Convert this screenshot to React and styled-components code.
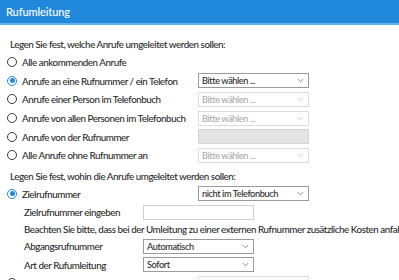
import React from "react";
import styled, { createGlobalStyle } from "styled-components";

const GlobalStyle = createGlobalStyle`
  html, body {
    margin: 0;
    padding: 0;
    background: #fff;
    overflow: hidden;
  }
  body {
    font-family: "Lato", "Liberation Sans", sans-serif;
    font-size: 9.8px;
    font-weight: 500;
    letter-spacing: -0.45px;
    color: #2a2a2a;
  }
`;

const Page = styled.div`
  width: 399px;
  height: 280px;
  overflow: hidden;
`;

const Header = styled.div`
  height: 23px;
  background: #2089dc;
  border-bottom: 2px solid #62b0ec;
  display: flex;
  align-items: center;
  padding-left: 6px;
  color: #fff;
  font-size: 11px;
  letter-spacing: -0.1px;
`;

const Content = styled.div`
  padding-left: 7px;
  white-space: nowrap;
`;

const Intro = styled.div`
  margin: ${p => p.$top}px 0 0 3px;
  height: 18px;
  line-height: 18px;
`;

const Row = styled.div`
  display: grid;
  grid-template-columns: 191px 111px;
  align-items: center;
  height: 18.6px;
`;

const RadioLabel = styled.label`
  display: flex;
  align-items: center;
  gap: 5px;
`;

const Radio = styled.span`
  box-sizing: border-box;
  width: 10px;
  height: 10px;
  border-radius: 50%;
  border: 1.2px solid ${p => (p.$checked ? "#2089dc" : "#3a3a3a")};
  display: flex;
  align-items: center;
  justify-content: center;
  &::after {
    content: "";
    width: 5px;
    height: 5px;
    border-radius: 50%;
    background: ${p => (p.$checked ? "#2089dc" : "transparent")};
  }
`;

const SelectBox = styled.div`
  box-sizing: border-box;
  height: 15px;
  border: 1px solid ${p => (p.$disabled ? "#dcdcdc" : "#9a9a9a")};
  color: ${p => (p.$disabled ? "#aaa" : "#2a2a2a")};
  background: #fff;
  display: flex;
  align-items: center;
  justify-content: space-between;
  padding: 0 4px 0 3px;
  font-size: 9.2px;
  letter-spacing: -0.4px;
`;

const GrayBox = styled.div`
  box-sizing: border-box;
  height: 15px;
  border: 1px solid #d4d4d4;
  background: #e4e4e4;
`;

const TextBox = styled.div`
  box-sizing: border-box;
  height: 15px;
  border: 1px solid #cfcfcf;
  background: #fff;
`;

const SubRow = styled.div`
  display: grid;
  grid-template-columns: 119px 111px;
  align-items: center;
  height: 18.6px;
  padding-left: 17px;
`;

const Note = styled.div`
  padding-left: 17px;
  height: 15px;
  line-height: 15px;
`;

const Chevron = ({ color }) => (
  <svg width="7" height="5" viewBox="0 0 7 5">
    <path d="M0.8 1 L3.5 3.8 L6.2 1" fill="none" stroke={color} strokeWidth="0.9" />
  </svg>
);

const Select = ({ value, disabled }) => (
  <SelectBox $disabled={disabled}>
    <span>{value}</span>
    <Chevron color={disabled ? "#c8c8c8" : "#888"} />
  </SelectBox>
);

const rows = [
  { label: "Alle ankommenden Anrufe" },
  { label: "Anrufe an eine Rufnummer / ein Telefon", checked: true, field: "select" },
  { label: "Anrufe einer Person im Telefonbuch", field: "disabled" },
  { label: "Anrufe von allen Personen im Telefonbuch", field: "disabled" },
  { label: "Anrufe von der Rufnummer", field: "gray" },
  { label: "Alle Anrufe ohne Rufnummer an", field: "disabled" },
];

const Field = ({ type }) => {
  if (type === "select") return <Select value="Bitte wählen ..." />;
  if (type === "disabled") return <Select value="Bitte wählen ..." disabled />;
  if (type === "gray") return <GrayBox />;
  return <span />;
};

export default function App() {
  return (
    <Page>
      <GlobalStyle />
      <Header>Rufumleitung</Header>
      <Content>
        <Intro $top={10}>Legen Sie fest, welche Anrufe umgeleitet werden sollen:</Intro>
        {rows.map(r => (
          <Row key={r.label}>
            <RadioLabel>
              <Radio $checked={r.checked} />
              {r.label}
            </RadioLabel>
            <Field type={r.field} />
          </Row>
        ))}
        <Intro $top={2}>Legen Sie fest, wohin die Anrufe umgeleitet werden sollen:</Intro>
        <Row>
          <RadioLabel>
            <Radio $checked />
            Zielrufnummer
          </RadioLabel>
          <Select value="nicht im Telefonbuch" />
        </Row>
        <SubRow>
          <span>Zielrufnummer eingeben</span>
          <TextBox />
        </SubRow>
        <Note>
          Beachten Sie bitte, dass bei der Umleitung zu einer externen Rufnummer zusätzliche Kosten anfallen können.
        </Note>
        <SubRow>
          <span>Abgangsrufnummer</span>
          <Select value="Automatisch" />
        </SubRow>
        <SubRow>
          <span>Art der Rufumleitung</span>
          <Select value="Sofort" />
        </SubRow>
        <Row>
          <RadioLabel>
            <Radio />
            Telefon
          </RadioLabel>
          <Select value="Bitte wählen ..." disabled />
        </Row>
      </Content>
    </Page>
  );
}
